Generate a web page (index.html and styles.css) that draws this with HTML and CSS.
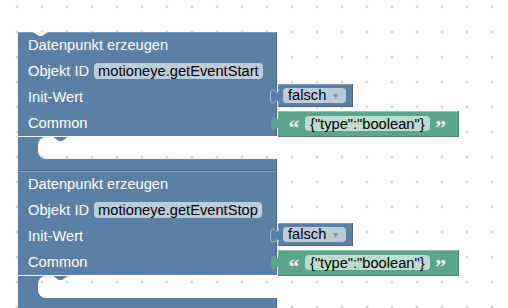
FILE: index.html
```html
<!DOCTYPE html>
<html lang="de">
<head>
    <meta charset="UTF-8">
    <title>Blockly</title>
    <link rel="stylesheet" href="styles.css">
</head>
<body>
    <div class="workspace">
        <div class="stack">

            <div class="block">
                <div class="cell head">
                    <svg class="notch" width="15" height="5" viewBox="0 0 15 5"><path d="M0,0 L6,4 L9,4 L15,0 Z" fill="#fff"/></svg>
                    <span>Datenpunkt erzeugen</span>
                </div>
                <div class="row">
                    <div class="cell"><span>Objekt ID</span><span class="field">motioneye.getEventStart</span></div>
                </div>
                <div class="row">
                    <div class="cell">Init-Wert</div>
                    <div class="value logic">
                        <svg class="tab" width="9" height="16" viewBox="0 0 9 16"><path d="M8.5,0 c0,10 -8,-8 -8,7.5 s8,-2.5 8,7.5" fill="#5b80a5" stroke="#a9bccf" stroke-width="1"/></svg>
                        <span class="field drop">falsch<span class="arrow">▾</span></span>
                    </div>
                </div>
                <div class="row">
                    <div class="cell">Common</div>
                    <div class="value text">
                        <svg class="tab" width="9" height="16" viewBox="0 0 9 16"><path d="M9,0 c0,10 -8,-8 -8,7.5 s8,-2.5 8,7.5 Z" fill="#5ba58c"/></svg>
                        <span class="quote">“</span>
                        <span class="field">{"type":"boolean"}</span>
                        <span class="quote">”</span>
                    </div>
                </div>
                <div class="stmt">
                    <div class="arm"></div>
                    <div class="hole">
                        <svg class="bump" width="15" height="5" viewBox="0 0 15 5"><path d="M0,0 L6,4 L9,4 L15,0 Z" fill="#5b80a5"/></svg>
                    </div>
                </div>
                <div class="foot"></div>
            </div>

            <div class="block">
                <div class="cell head"><span>Datenpunkt erzeugen</span></div>
                <div class="row">
                    <div class="cell"><span>Objekt ID</span><span class="field">motioneye.getEventStop</span></div>
                </div>
                <div class="row">
                    <div class="cell">Init-Wert</div>
                    <div class="value logic">
                        <svg class="tab" width="9" height="16" viewBox="0 0 9 16"><path d="M8.5,0 c0,10 -8,-8 -8,7.5 s8,-2.5 8,7.5" fill="#5b80a5" stroke="#a9bccf" stroke-width="1"/></svg>
                        <span class="field drop">falsch<span class="arrow">▾</span></span>
                    </div>
                </div>
                <div class="row">
                    <div class="cell">Common</div>
                    <div class="value text">
                        <svg class="tab" width="9" height="16" viewBox="0 0 9 16"><path d="M9,0 c0,10 -8,-8 -8,7.5 s8,-2.5 8,7.5 Z" fill="#5ba58c"/></svg>
                        <span class="quote">“</span>
                        <span class="field">{"type":"boolean"}</span>
                        <span class="quote">”</span>
                    </div>
                </div>
                <div class="stmt">
                    <div class="arm"></div>
                    <div class="hole">
                        <svg class="bump" width="15" height="5" viewBox="0 0 15 5"><path d="M0,0 L6,4 L9,4 L15,0 Z" fill="#5b80a5"/></svg>
                    </div>
                </div>
                <div class="foot"></div>
            </div>

        </div>
    </div>
</body>
</html>
```

FILE: styles.css
```css
body {
    margin: 0;
    padding: 0;
    font-family: 'Liberation Sans', Arial, sans-serif;
    font-size: 14.67px;
}

.workspace {
    width: 508px;
    height: 308px;
    overflow: hidden;
    box-sizing: border-box;
    padding: 32px 0 0 18px;
    background-color: #fff;
    background-image: radial-gradient(circle at 1.5px 1.5px, #c4c4c4 0.9px, transparent 1.5px);
    background-size: 25px 25px;
    background-position: 15.5px 5.5px;
}

.block {
    display: flex;
    flex-direction: column;
}

.row {
    display: flex;
    align-items: flex-start;
}

.cell {
    position: relative;
    width: 259px;
    height: 26px;
    box-sizing: border-box;
    padding-left: 10px;
    display: flex;
    align-items: center;
    background-color: #5b80a5;
    color: #fff;
    border-right: 1px solid #46678a;
    white-space: nowrap;
}

.head {
    box-shadow: inset 0 1px 0 #86a1bd;
}

.notch {
    position: absolute;
    top: 0;
    left: 15px;
}

.field {
    display: inline-flex;
    align-items: center;
    height: 16px;
    padding: 0 4px;
    margin-left: 5px;
    border-radius: 4px;
    background-color: #bdccdb;
    color: #000;
}

.value {
    position: relative;
    margin-left: 1px;
    display: flex;
    align-items: center;
    box-sizing: border-box;
}

.tab {
    position: absolute;
    left: -8px;
    top: 5px;
}

.logic {
    height: 23px;
    padding: 0 6px 0 5px;
    background-color: #5b80a5;
    border-right: 1px solid #46678a;
    border-bottom: 1px solid #46678a;
    box-shadow: inset 0 1px 0 #86a1bd;
}

.drop {
    margin-left: 0;
    padding: 0 8px 0 5px;
    height: 15px;
}

.arrow {
    margin-left: 7px;
    font-size: 10px;
    color: #8198b0;
}

.text {
    height: 26px;
    margin-top: 1px;
    padding: 0 11px 0 10px;
    background-color: #5ba58c;
    border-right: 1px solid #468470;
    border-bottom: 1px solid #468470;
    box-shadow: inset 0 1px 0 #8cc3b0;
}

.text .field {
    background-color: #bddbd1;
    height: 15px;
    margin: 0 5px;
    padding: 0 5px;
}

.quote {
    display: inline-block;
    width: 12px;
    text-align: center;
    color: #eef6f3;
    font-family: 'Liberation Serif', serif;
    font-weight: bold;
    font-size: 22px;
    line-height: 1;
    padding-top: 8px;
}

.stmt {
    display: flex;
    width: 259px;
    height: 22px;
    overflow: hidden;
}

.arm {
    width: 20px;
    background-color: #5b80a5;
}

.hole {
    position: relative;
    flex: 1;
    border-radius: 8px 0 0 8px;
    box-shadow: 0 0 0 8px #5b80a5;
}

.bump {
    position: absolute;
    top: 0;
    left: 15px;
}

.foot {
    width: 259px;
    height: 12px;
    box-sizing: border-box;
    background-color: #5b80a5;
    border-right: 1px solid #46678a;
    border-bottom: 1px solid #46678a;
}
```
